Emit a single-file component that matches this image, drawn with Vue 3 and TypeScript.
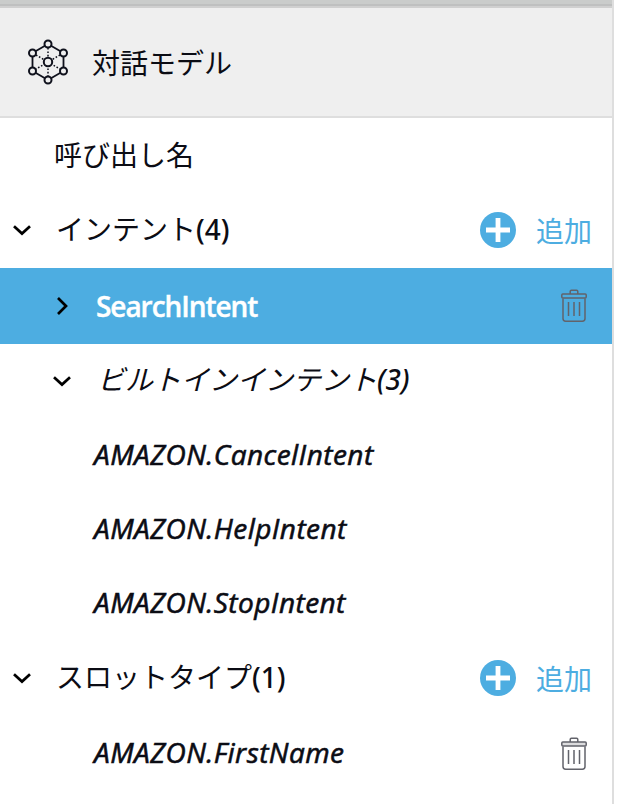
<script setup lang="ts">
interface Row {
  id: string
  kind: 'plain' | 'group' | 'item' | 'sub' | 'leaf'
  label: string
  count?: string
  chevron?: 'down' | 'right'
  add?: boolean
  trash?: boolean
}

const rows: Row[] = [
  { id: 'invocation', kind: 'plain', label: '呼び出し名' },
  { id: 'intents', kind: 'group', label: 'インテント', count: '(4)', chevron: 'down', add: true },
  { id: 'search', kind: 'item', label: 'SearchIntent', chevron: 'right', trash: true },
  { id: 'builtin', kind: 'sub', label: 'ビルトインインテント', count: '(3)', chevron: 'down' },
  { id: 'cancel', kind: 'leaf', label: 'AMAZON.CancelIntent' },
  { id: 'help', kind: 'leaf', label: 'AMAZON.HelpIntent' },
  { id: 'stop', kind: 'leaf', label: 'AMAZON.StopIntent' },
  { id: 'slots', kind: 'group', label: 'スロットタイプ', count: '(1)', chevron: 'down', add: true },
  { id: 'first', kind: 'leaf', label: 'AMAZON.FirstName', trash: true },
]
</script>

<template>
  <aside class="panel">
    <div class="strip"></div>
    <header class="head">
      <svg class="model" width="42" height="46" viewBox="0 0 42 46" fill="none" stroke="#0f111c">
        <path d="M21 5 36.500 14V32L21 41 5.500 32V14Z" stroke-width="1.800" />
        <path d="M21 9V37M9 16 33 30M33 16 9 30" stroke-width="1.500" stroke-dasharray="1.600 1.800" />
        <g fill="#efefef" stroke-width="2">
          <circle cx="21" cy="5" r="3.500" />
          <circle cx="36.500" cy="14" r="3.500" />
          <circle cx="36.500" cy="32" r="3.500" />
          <circle cx="21" cy="41" r="3.500" />
          <circle cx="5.500" cy="32" r="3.500" />
          <circle cx="5.500" cy="14" r="3.500" />
          <circle cx="21" cy="23" r="4.200" />
        </g>
      </svg>
      <h1 class="title">対話モデル</h1>
    </header>
    <nav>
      <div v-for="row in rows" :key="row.id" class="row" :class="[row.kind, row.id]">
        <svg v-if="row.chevron" class="chevron" width="20" height="20" viewBox="0 0 20 20" fill="none" stroke="#000" stroke-width="2.700">
          <path v-if="row.chevron === 'down'" d="M2 6.200 10 13.600 18 6.200" />
          <path v-else d="M6 2 14 10 6 18" />
        </svg>
        <span class="label">{{ row.label }}<span v-if="row.count" class="count">{{ row.count }}</span></span>
        <button v-if="row.add" class="add" type="button">
          <svg width="36" height="36" viewBox="0 0 36 36">
            <circle cx="18" cy="18" r="18" fill="#4dade1" />
            <path d="M18 6V30M6 18H30" stroke="#fff" stroke-width="4.800" />
          </svg>
          <span class="add-text">追加</span>
        </button>
        <svg v-if="row.trash" class="trash" width="26" height="34" viewBox="0 0 26 34" fill="none" stroke="#62636b" stroke-width="1.500">
          <path d="M9.200 5V2.500Q9.200 1.300 10.400 1.300H15.600Q16.800 1.300 16.800 2.500V5" />
          <rect class="lid" x=".8" y="5" width="24.400" height="4" rx="1" />
          <path d="M2 9.500V29.500Q2 32.200 4.700 32.200H21.300Q24 32.200 24 29.500V9.500M7.500 13V27M13 13V27M18.500 13V27" />
        </svg>
      </div>
    </nav>
  </aside>
</template>

<style>
body {
  background: #fff;
}
</style>

<style scoped>
.panel {
  box-sizing: border-box;
  width: 614px;
  height: 804px;
  overflow: hidden;
  border-right: 2px solid #dedede;
  color: #0b0c14;
  font-family: "Open Sans", "Noto Sans CJK JP", sans-serif;
  font-size: 28px;
  line-height: 40px;
}
.strip {
  height: 4px;
  background: #cacccb;
  border-bottom: 2px solid #bfc0c0;
}
.head {
  box-sizing: border-box;
  height: 112px;
  display: flex;
  align-items: center;
  padding-left: 27px;
  background: #efefef;
  border-top: 2px solid #d0d0d0;
  border-bottom: 2px solid #dedede;
}
.title {
  margin: 0 0 0 23px;
  font-family: "Noto Sans CJK JP", sans-serif;
  font-size: 28px;
  font-weight: 400;
}
.row {
  height: 74px;
  display: flex;
  align-items: center;
  white-space: nowrap;
}
.label {
  padding-bottom: 2px;
}
.plain {
  padding-left: 54px;
}
.group {
  height: 76px;
  padding-left: 12px;
}
.item {
  height: 76px;
  padding-left: 52px;
  background: #4dade1;
  color: #fff;
  font-weight: 600;
  letter-spacing: -1.05px;
}
.item .label {
  padding-bottom: 0;
  -webkit-text-stroke: 0.4px #fff;
}
.sub {
  padding-left: 52px;
  font-style: italic;
}
.leaf {
  padding-left: 94px;
  font-style: italic;
  letter-spacing: 0.45px;
}
.leaf .label {
  -webkit-text-stroke: 0.6px #0b0c14;
}
.plain .label,
.group .label,
.sub .label {
  font-family: "Noto Sans CJK JP", sans-serif;
}
.sub .label {
  padding-bottom: 5px;
}
.group .label {
  padding-bottom: 3px;
}
.chevron,
.model {
  flex: none;
}
.chevron {
  margin-right: 24px;
}
.sub .chevron {
  margin-right: 25px;
}
.count,
.sub .count {
  font-family: "Noto Sans", sans-serif;
  font-weight: 500;
}
.add {
  display: flex;
  align-items: center;
  gap: 20px;
  margin: 0 20px 0 auto;
  padding: 0;
  border: 0;
  background: none;
  color: #4dade1;
  font: 28px/40px "Noto Sans CJK JP", sans-serif;
}
.trash {
  margin: 0 25px 0 auto;
}
.leaf .trash {
  margin-top: 2px;
}
.leaf .lid {
  fill: #dcdcde;
}
</style>
